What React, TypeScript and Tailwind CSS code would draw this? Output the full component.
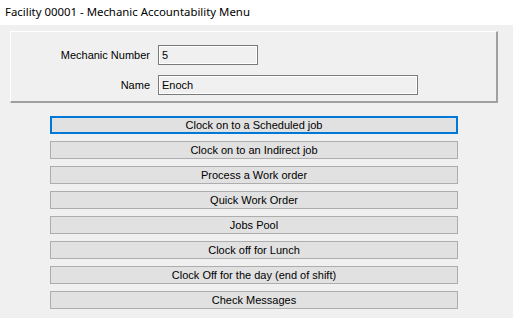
const buttons = [
  "Clock on to a Scheduled job",
  "Clock on to an Indirect job",
  "Process a Work order",
  "Quick Work Order",
  "Jobs Pool",
  "Clock off for Lunch",
  "Clock Off for the day (end of shift)",
  "Check Messages",
]

export default function App() {
  return (
    <div className="w-[513px] h-[318px] bg-[#f0f0f0] overflow-hidden font-['Liberation_Sans',Arial,sans-serif] text-[11px] text-black">
      {/* Title */}
      <div className="h-[25px] bg-white pl-[5px] pt-[4px] font-['Noto_Sans',sans-serif] text-[11.4px] leading-[16px] text-[#000]">
        Facility 00001 - Mechanic Accountability Menu
      </div>

      {/* Mechanic panel */}
      <div className="ml-[10px] mt-[6px] w-[488px] h-[72px] border-t border-l border-white border-r-2 border-b-2 border-r-[#a0a0a0] border-b-[#a0a0a0] pt-[13px] flex flex-col gap-[10px]">
        <div className="flex items-center gap-[8px]">
          <div className="w-[139px] text-right">Mechanic Number</div>
          <div className="w-[100px] h-[20px] border border-[#7a7a7a] shadow-[inset_0_0_0_1px_#ffffff] pl-[3px] flex items-center">5</div>
        </div>
        <div className="flex items-center gap-[8px]">
          <div className="w-[139px] text-right">Name</div>
          <div className="w-[260px] h-[20px] border border-[#7a7a7a] shadow-[inset_0_0_0_1px_#ffffff] pl-[3px] flex items-center">Enoch</div>
        </div>
      </div>

      {/* Menu buttons */}
      <div className="ml-[50px] mt-[13px] w-[408px] flex flex-col gap-[7px]">
        {buttons.map((b, i) => (
          <div
            key={b}
            className={
              i === 0
                ? "h-[18px] bg-[#e1e1e1] border-2 border-[#0078d7] flex items-center justify-center leading-none"
                : "h-[18px] bg-[#e1e1e1] border border-[#adadad] flex items-center justify-center leading-none"
            }
          >
            {b}
          </div>
        ))}
      </div>
    </div>
  )
}
